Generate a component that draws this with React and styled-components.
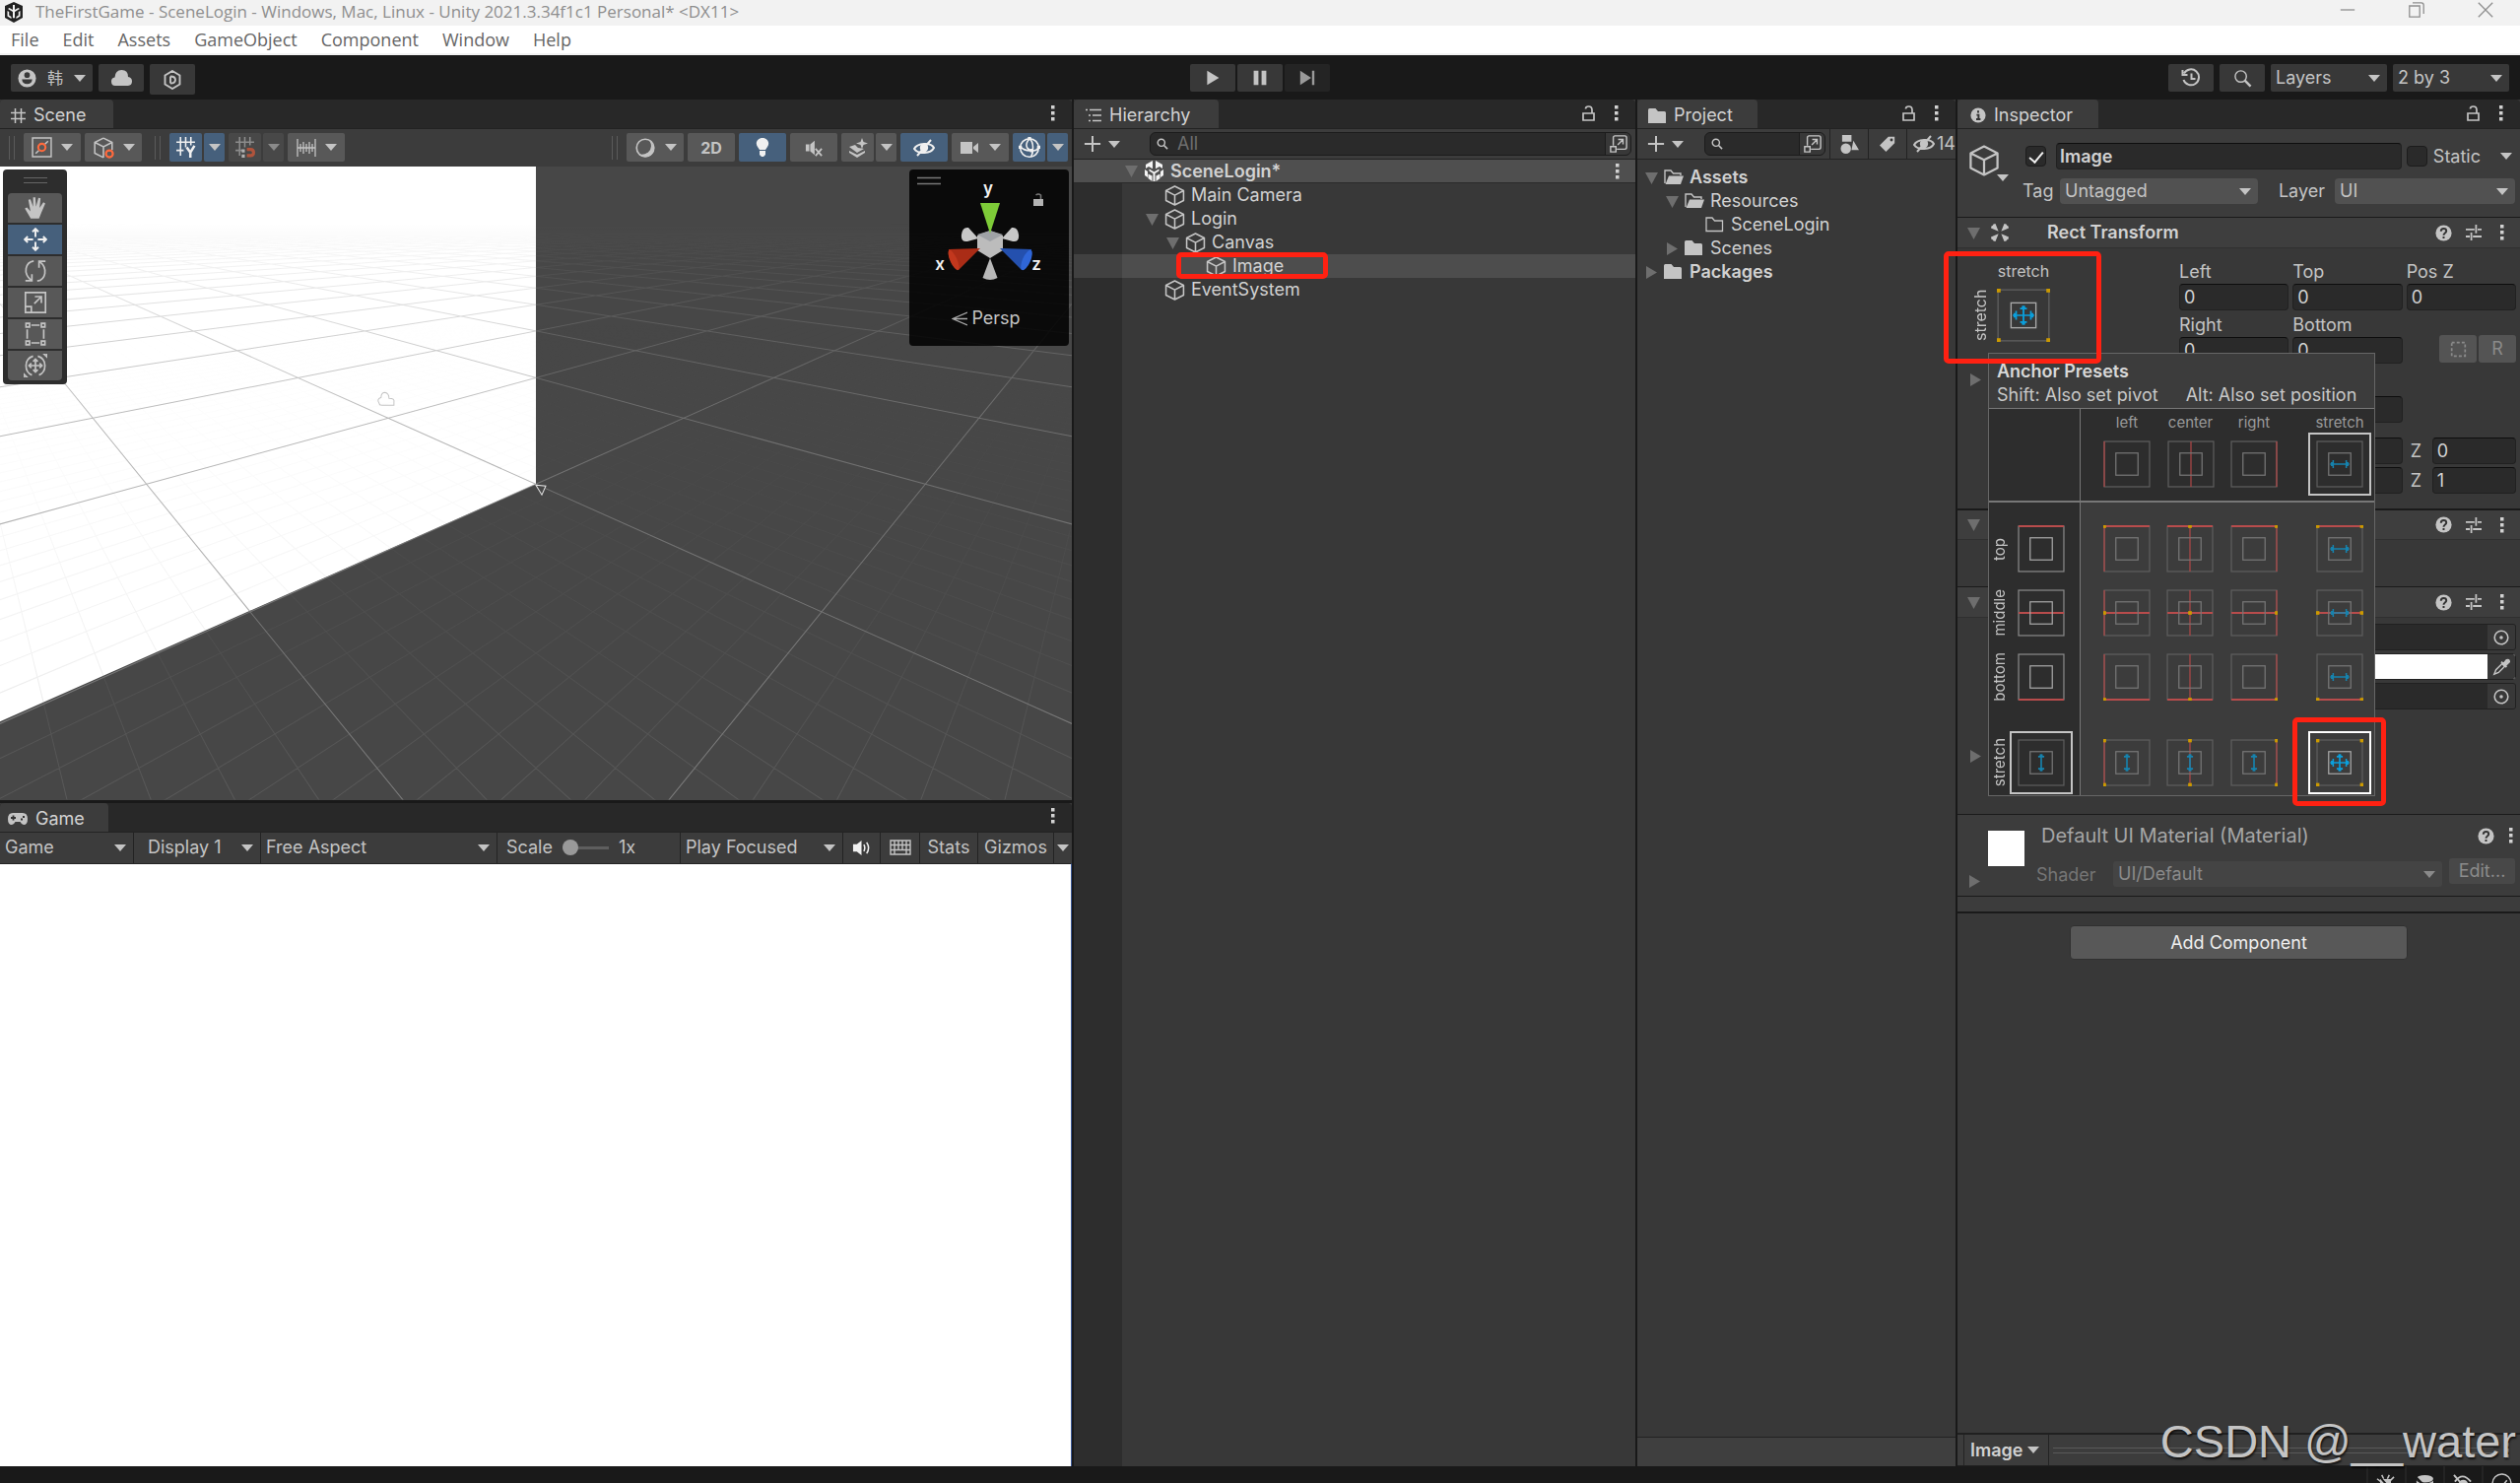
import React, { useState } from 'react';
import styled, { createGlobalStyle, css } from 'styled-components';

const GlobalStyle = createGlobalStyle`
  * {
    box-sizing: border-box;
  }

  body {
    margin: 0;
    background: #191919;
    color: #c4c4c4;
    font: 18px/24px Inter, 'Noto Sans CJK SC', sans-serif;
    overflow: hidden;
  }

  button, input, select {
    margin: 0;
    padding: 0;
    border: 0;
    color: inherit;
    font: inherit;
    background: none;
    border-radius: 0;
  }

  svg {
    display: block;
    flex: none;
  }
`;

/* ---------- icons ---------- */

const Icon = ({ size = 20, w, h, box, children, ...rest }) => (
  <svg
    width={w || size}
    height={h || size}
    viewBox={box || '0 0 20 20'}
    fill="none"
    stroke="#c4c4c4"
    strokeWidth="1.6"
    aria-hidden="true"
    {...rest}
  >
    {children}
  </svg>
);

const Caret = ({ fill = '#c4c4c4' }) => (
  <Icon w={12} h={7} box="0 0 12 7" stroke="none" fill={fill}>
    <path d="M0 0h12L6 7z" />
  </Icon>
);

const Foldout = ({ open }) => (
  <Icon w={13} h={13} box="0 0 13 13" stroke="none" fill="#6e6e6e">
    <path d={open ? 'M0 1h13L6.500 13z' : 'M1 0v13l11-6.500z'} />
  </Icon>
);

const Dots = () => (
  <Icon w={4} h={16} box="0 0 4 16" stroke="none" fill="#d2d2d2">
    <path d="M0 0h3.500v3.500H0zM0 6h3.500v3.500H0zM0 12h3.500v3.500H0z" />
  </Icon>
);

const LockIcon = () => (
  <Icon w={13} h={16} box="0 0 13 16" strokeWidth="1.700">
    <path d="M1 8h11v7H1zM10 8V4.500C10 2 8.500 1 6.500 1S3.500 2 3.500 3.500" />
  </Icon>
);

const CubeIcon = ({ size = 21 }) => (
  <Icon size={size} strokeWidth={size > 24 ? 1.4 : 1.5} strokeLinejoin="round">
    <path d="M10 1l8.500 4.300v9.400L10 19l-8.500-4.300V5.300zM1.500 5.300L10 9.600l8.500-4.300M10 9.600V19" />
  </Icon>
);

const UnityLogo = () => (
  <Icon w={19} h={21} box="0 0 19 21" stroke="none" fill="#f4f4f4">
    <path d="M8 0L1 4v4l3-2 4 2.300V0zM11 0v8.300L15 6l3 2V4zM0 9v6l3 2V11zM19 9v6l-3 2v-6zM4.500 8.500l5 3 5-3v2l-4 2.500v8h-2v-8l-4-2.500zM3.500 18l4 3v-5.500l-4-2zM15.500 18l-4 3v-5.500l4-2z" />
  </Icon>
);

const AppLogo = () => (
  <Icon w={20} h={21} box="0 0 20 21" stroke="none">
    <path d="M10 0l9 4v12l-9 5-9-5V4z" fill="#222" />
    <path d="M9 3v5L5.500 6 4 7l5 3v6l1 .6 1-.6v-6l5-3-1.500-1L11 8V3zM3.500 9v5.500l4 2.500v-2l-2.300-1.500V10zM16.500 9v5.500l-4 2.500v-2l2.300-1.500V10z" fill="#f2f2f2" />
  </Icon>
);

const SearchIcon = ({ size = 12 }) => (
  <Icon size={size}>
    <circle cx="8" cy="8" r="6" strokeWidth={size > 16 ? 1.500 : 2.400} />
    <path d="M12 12l6.500 6.500" strokeWidth="2.600" />
  </Icon>
);

const JumpIcon = () => (
  <Icon size={18}>
    <path d="M4 12V3q0-2 2-2h11q2 0 2 2v11q0 2-2 2H8M9 11l6-6M9.500 5H15v5.500M1 13h6v6H1z" />
  </Icon>
);

const PlusIcon = () => (
  <Icon size={18} strokeWidth="2.200">
    <path d="M10 1v18M1 10h18" />
  </Icon>
);

const EyeOffIcon = ({ color = '#c4c4c4' }) => (
  <Icon w={22} h={18} box="0 0 22 18" stroke={color} strokeWidth="2">
    <path d="M1 10C4 4 18 3 21 9 18 15 5 16 1 10zM4 17L18 1" />
    <circle cx="11" cy="9" r="3.200" fill={color} />
  </Icon>
);

const HelpIcon = () => (
  <Icon size={17}>
    <circle cx="10" cy="10" r="9.500" fill="#c4c4c4" stroke="none" />
    <path d="M6.800 7.800C6.800 3.500 13.200 3.800 13.200 7.500c0 2.500-3.200 2.400-3.200 5M10 14v2.600" stroke="#333" strokeWidth="2.300" />
  </Icon>
);

const PresetIcon = () => (
  <Icon size={16}>
    <path d="M0 6h11M15 6h5M13 0v11M0 15h5M9 15h11M7 10v10" strokeWidth="2.200" />
  </Icon>
);

const FolderClosed = () => (
  <Icon w={20} h={16} box="0 0 20 16" stroke="none" fill="#c4c4c4">
    <path d="M0 1.500Q0 0 1.500 0h6l2.500 3h6.500Q18 3 18 4.500V15H0z" />
  </Icon>
);

const FolderOpen = () => (
  <Icon w={20} h={16} box="0 0 20 16">
    <path d="M1 14V1h6l2.500 3H17v2" strokeWidth="1.400" />
    <path d="M5 6.500h15L17 15H1.500z" fill="#c4c4c4" stroke="none" />
  </Icon>
);

const FolderEmpty = () => (
  <Icon w={20} h={16} box="0 0 20 16" strokeWidth="1.300">
    <path d="M1 14.500V1h6l2.500 3H17.500v10.500z" />
  </Icon>
);

const TargetIcon = () => (
  <Icon size={16}>
    <circle cx="10" cy="10" r="8.500" strokeWidth="2" />
    <circle cx="10" cy="10" r="2.200" fill="#c4c4c4" stroke="none" />
  </Icon>
);

const SnapGrid = ({ magnet }) => (
  <Icon size={21} stroke={magnet ? '#8c8c8c' : '#f0f0f0'} strokeWidth="1.500">
    <path d="M1 5h18M1 13h7M5 0v18M10 0v10M15 0v8" />
    {magnet ? (
      <>
        <path d="M12 12h3.500q3 0 3 3t-3 3H12" stroke="#b0543c" strokeWidth="3" />
        <path d="M7 12h3v3H7zM7 17h3v3H7z" fill="#b0b0b0" stroke="none" />
      </>
    ) : (
      <path d="M11 10l3.500 5 4-6.500M14.500 15v5" strokeWidth="2.400" />
    )}
  </Icon>
);

/* ---------- shell ---------- */

const App = styled.div`
  display: flex;
  flex-direction: column;
  height: 100vh;
  position: relative;
  overflow: hidden;
`;

const TitleBar = styled.header`
  display: flex;
  align-items: center;
  height: 26px;
  padding: 0 27px 2px 4px;
  gap: 12px;
  background: #f2f2f2;
  color: #8e8e8e;
  font-family: 'Open Sans', sans-serif;
  font-size: 17px;
`;

const WindowButtons = styled.div`
  display: flex;
  gap: 54px;
  margin-left: auto;
  padding-bottom: 4px;
`;

const MenuBar = styled.nav`
  display: flex;
  align-items: center;
  height: 30px;
  padding: 0 11px;
  gap: 24px;
  background: #fff;
  border-bottom: 2px solid #f2f2f2;
  color: #666;
  font-family: 'Open Sans', sans-serif;
  font-size: 18px;
`;

const MainToolbar = styled.div`
  display: grid;
  grid-template-columns: 1fr auto 1fr;
  height: 45px;
  padding: 9px 11px;
  background: #191919;
`;

const ToolbarSide = styled.div`
  display: flex;
  align-items: flex-start;
  gap: 6px;
  justify-content: ${({ $end }) => ($end ? 'flex-end' : 'flex-start')};
`;

const BarButton = styled.button`
  display: flex;
  align-items: center;
  justify-content: center;
  gap: 11px;
  width: ${({ $w }) => $w || 46}px;
  height: ${({ $h }) => $h || 28}px;
  background: ${({ $dim }) => ($dim ? '#242424' : '#383838')};
  border-radius: 2px;
  font-size: 16px;
`;

const PlayControls = styled.div`
  display: flex;
  gap: 2px;
`;

const Workspace = styled.main`
  flex: 1;
  min-height: 0;
  display: grid;
  grid-template-columns: minmax(0, 1088fr) minmax(0, 570fr) minmax(0, 323fr) minmax(0, 571fr);
  gap: 2px;
`;

const LeftStack = styled.div`
  display: grid;
  grid-template-rows: minmax(0, 710fr) minmax(0, 673fr);
  gap: 3px;
  min-height: 0;
`;

const Panel = styled.section`
  display: flex;
  flex-direction: column;
  min-width: 0;
  min-height: 0;
  background: #383838;
  position: relative;
`;

const TabBar = styled.div`
  display: flex;
  align-items: stretch;
  height: 29px;
  background: #282828;
  border-radius: 4px 4px 0 0;
  flex: none;
`;

const Tab = styled.button`
  display: flex;
  align-items: center;
  gap: 8px;
  width: ${({ $w }) => $w}px;
  padding: 3px 0 0 ${({ $pad }) => $pad || 11}px;
  background: #3c3c3c;
  border-radius: 4px 4px 0 0;
  color: #d2d2d2;
`;

const TabActions = styled.div`
  display: flex;
  align-items: center;
  gap: 20px;
  margin-left: auto;
  padding: 0 17px 2px 0;
`;

const PanelBar = styled.div`
  display: flex;
  align-items: center;
  flex: none;
  height: ${({ $h }) => $h || 32}px;
  background: #3c3c3c;
  border-top: 1px solid #232323;
  border-bottom: ${({ $line }) => ($line ? '1px solid #232323' : '0')};
  overflow: hidden;
`;

const IconButton = styled.button`
  display: flex;
  align-items: center;
  justify-content: center;
  gap: 7px;
`;

/* drop-down: the native select with its arrow stacked in the same cell */
const SelectBox = styled.div`
  display: grid;
  align-items: center;
  flex: ${({ $grow }) => ($grow ? '1' : 'none')};
  width: ${({ $w }) => ($w ? `${$w}px` : 'auto')};
  height: ${({ $h }) => $h || 26}px;
  background: ${({ $bg }) => $bg || 'transparent'};
  border-radius: ${({ $r }) => $r || 0}px;
  color: ${({ $dim }) => ($dim ? '#8a8a8a' : 'inherit')};

  > * {
    grid-area: 1 / 1;
  }

  > svg {
    justify-self: end;
    margin-right: 7px;
    pointer-events: none;
  }

  select {
    appearance: none;
    width: 100%;
    height: 100%;
    padding-left: 5px;
    outline: none;
  }
`;

const Dropdown = ({ label, value, caret, ...box }) => (
  <SelectBox {...box}>
    <select aria-label={label} defaultValue={value}>
      <option>{value}</option>
    </select>
    <Caret fill={caret} />
  </SelectBox>
);

/* red frame drawn over a spot worth noticing */
const Marker = styled.div`
  position: absolute;
  z-index: 5;
  top: ${({ $top }) => $top}px;
  left: ${({ $left }) => $left}px;
  width: ${({ $w }) => $w}px;
  height: ${({ $h }) => $h}px;
  border: 5px solid #ff2112;
  border-radius: 5px;
  pointer-events: none;
`;

/* ---------- scene ---------- */

const SceneBar = styled(PanelBar)`
  gap: 4px;
  padding: 0 4px 1px 9px;
`;

const Grip = styled.span`
  width: 6px;
  height: 24px;
  margin: 0 ${({ $after }) => $after || 5}px 0 ${({ $before }) => $before || 0}px;
  border: solid #5a5a5a;
  border-width: 0 1px;
`;

const Split = styled.div`
  display: flex;
  gap: 2px;
`;

const SceneButton = styled.button`
  display: flex;
  align-items: center;
  justify-content: center;
  gap: 9px;
  width: ${({ $w }) => $w || 48}px;
  height: 29px;
  border-radius: 2px;
  font-weight: 700;
  font-size: 16px;
  background: ${({ $on, $off }) => ($on ? '#46607c' : $off ? '#484848' : '#585858')};
`;

const Spacer = styled.div`
  flex: 1;
`;

const Viewport = styled.div`
  position: relative;
  flex: 1;
  min-height: 0;
  background: #474747;
  overflow: hidden;
`;

const Canvas = styled.svg`
  width: 100%;
  height: 100%;
`;

const ToolStrip = styled.div`
  position: absolute;
  top: 3px;
  left: 3px;
  display: flex;
  flex-direction: column;
  gap: 2px;
  padding: 8px 5px 4px;
  background: #2d2d2d;
  border-radius: 4px;
`;

const Handle = styled.div`
  width: 24px;
  height: 6px;
  border: solid #666;
  border-width: 1px 0;
  margin: 0 auto 8px;
`;

const ToolButton = styled.button`
  display: flex;
  align-items: center;
  justify-content: center;
  width: 55px;
  height: 30px;
  border-radius: ${({ $edge }) => ($edge === 'top' ? '4px 4px 0 0' : $edge === 'bottom' ? '0 0 4px 4px' : '0')};
  background: ${({ $on }) => ($on ? '#46607c' : '#585858')};
`;

const Orientation = styled.div`
  position: absolute;
  top: 3px;
  right: 3px;
  width: 162px;
  height: 179px;
  background: rgba(0, 0, 0, 0.85);
  border-radius: 4px;
`;

const PerspButton = styled.button`
  display: flex;
  align-items: center;
  justify-content: center;
  gap: 4px;
  width: 100%;
  padding-right: 6px;
`;

const AxisText = styled.text`
  font: 600 17px Inter, sans-serif;
  fill: #f2f2f2;
  stroke: none;
  text-anchor: middle;
`;

/* ground grid: two fans of lines meeting at vanishing points left and right */
const HORIZON = 45;
const CENTER = 544;
const A = 0.00361;
const B = 0.0023;

const gridLine = (c, side) => {
  const k = A + B * c;
  const y = (x) => HORIZON + (1 - (side * B * (x - CENTER)) / 1.426) / k;
  return `M0 ${y(0).toFixed(1)}L1088 ${y(1088).toFixed(1)}`;
};

const fan = (from, to, step) => {
  const out = [];
  for (let i = 0; from + i * step <= to + 0.001; i++) {
    const c = from + i * step;
    out.push(gridLine(c, 1), gridLine(c, -1));
  }
  return out.join('');
};

const MAJOR = fan(-1, 45, 1);
const MINOR = fan(-1.5, 3, 0.1);

const SceneCanvas = () => (
  <Canvas viewBox="0 0 1088 642" preserveAspectRatio="xMidYMin slice" fill="none">
    <defs>
      <linearGradient id="far" x1="0" y1="57" x2="0" y2="642" gradientUnits="userSpaceOnUse">
        <stop offset="0" stopColor="#fff" stopOpacity="0" />
        <stop offset="0.08" stopColor="#fff" stopOpacity="0.12" />
        <stop offset="0.2" stopColor="#fff" stopOpacity="0.4" />
        <stop offset="0.35" stopColor="#fff" stopOpacity="0.6" />
        <stop offset="1" stopColor="#fff" stopOpacity="0.7" />
      </linearGradient>
      <linearGradient id="near" x1="0" y1="150" x2="0" y2="642" gradientUnits="userSpaceOnUse">
        <stop offset="0" stopColor="#fff" stopOpacity="0" />
        <stop offset="0.3" stopColor="#fff" stopOpacity="0.03" />
        <stop offset="0.7" stopColor="#fff" stopOpacity="0.12" />
        <stop offset="1" stopColor="#fff" stopOpacity="0.28" />
      </linearGradient>
      <mask id="farMask" maskUnits="userSpaceOnUse" x="0" y="0" width="1088" height="642">
        <rect width="1088" height="642" fill="url(#far)" />
      </mask>
      <mask id="nearMask" maskUnits="userSpaceOnUse" x="0" y="0" width="1088" height="642">
        <rect width="1088" height="642" fill="url(#near)" />
      </mask>
    </defs>
    <path d="M0 0H544V322L0 563z" fill="#fff" />
    <g mask="url(#nearMask)">
      <path d={MINOR} stroke="#8a8a8a" />
    </g>
    <g mask="url(#farMask)">
      <path d={MAJOR} stroke="#8a8a8a" />
    </g>
    <path d="M385 240q-3-4 2-6 0-5 4-5 4 1 4 6 6 0 5 4v3h-12q-3 0-3-2z" stroke="#c4c4c4" />
    <path d="M544 323l10 1-4 9z" stroke="#e6e6e6" fill="#474747" />
  </Canvas>
);

const ScenePanel = () => {
  const [tool, setTool] = useState('Move');

  const tools = [
    ['Hand', <path key="p" d="M6 19L1 10.500 2.800 9.500l3 3.500L4 3.200 5.800 2.800 8 9V1h1.900L10.500 9l2-7.500 1.800.4-.8 8 3.200-4.600 1.600 1L15 14l-2 5z" fill="#c4c4c4" stroke="none" />],
    ['Move', <path key="p" d="M10 8V1M7.500 3.500L10 1l2.500 2.500M10 12v7M7.500 16.500L10 19l2.500-2.500M8 10H1M3.500 7.500L1 10l2.500 2.500M12 10h7M16.500 7.500L19 10l-2.500 2.500" stroke="#f0f0f0" />],
    ['Rotate', <path key="p" d="M8.500 1.500C1.500 2.500-1 12 6.500 18M1.500 18.200h5.500v-5.500M11.500 18.500C18.500 17.500 21 8 13.500 2M18.500 1.800H13v5.500" strokeWidth="1.400" />],
    ['Scale', <path key="p" d="M1.500 1.500h17v17h-17zM1.500 13.500h5v5M9 11l6-6M9.500 5H15v5.500" strokeWidth="1.400" />],
    ['Rect', <path key="p" d="M6.500 2.500h7M6.500 17.500h7M3 6v8M17 6v8M2 1h3v3H2zM15 1h3v3h-3zM2 16h3v3H2zM15 16h3v3h-3z" strokeWidth="1.400" />],
    ['Transform', <path key="p" d="M10 5v10M5 10h10M8 6.500l2-2 2 2M8 13.500l2 2 2-2M6.500 8l-2 2 2 2M13.500 8l2 2-2 2M8 2Q2 4 2 10t5 8M12 2q6 2 6 8t-5 8M17 0h3v3zM0 20v-3l3 3z" strokeWidth="1.400" />],
  ];

  return (
    <Panel>
      <TabBar>
        <Tab $w={115} $pad={11}>
          <Icon size={15} strokeWidth="2"><path d="M6 0v20M14 0v20M0 6h20M0 14h20" /></Icon>
          Scene
        </Tab>
        <TabActions><Dots /></TabActions>
      </TabBar>
      <SceneBar $h={39}>
        <Grip />
        <SceneButton $w={58} aria-label="Tool pivot">
          <Icon size={21} strokeWidth="1.400">
            <path d="M1 1h18v18H1zM4 16l3-3M13 7l3-3" /><circle cx="10" cy="10" r="3.500" stroke="#ff6a3d" strokeWidth="2" />
          </Icon>
          <Caret />
        </SceneButton>
        <SceneButton $w={58} aria-label="Tool rotation">
          <Icon size={22} strokeWidth="1.400">
            <path d="M10 1l8 4v7M10 19l-8-4V5l8-4M2 5l8 4 8-4M10 9v10" /><circle cx="15.500" cy="15.500" r="3.200" stroke="#ff6a3d" strokeWidth="2" />
          </Icon>
          <Caret />
        </SceneButton>
        <Grip $before={9} />
        <Split>
          <SceneButton $w={33} $on aria-label="Grid"><SnapGrid /></SceneButton>
          <SceneButton $w={21} $on aria-label="Grid options"><Caret /></SceneButton>
        </Split>
        <Split>
          <SceneButton $w={33} $off aria-label="Snap"><SnapGrid magnet /></SceneButton>
          <SceneButton $w={21} $off aria-label="Snap options"><Caret fill="#8a8a8a" /></SceneButton>
        </Split>
        <SceneButton $w={58} aria-label="Increment">
          <Icon size={20}><path d="M1 1v18M19 1v18M1 10h18M4 6v8M7 4v12M10 6v8M13 4v12M16 6v8" strokeWidth="1.300" /></Icon>
          <Caret />
        </SceneButton>
        <Spacer />
        <Grip />
        <SceneButton $w={58} aria-label="Shading">
          <Icon size={22}>
            <circle cx="10" cy="10" r="8" strokeWidth="1.500" />
            <path d="M14.500 3.500Q18 10 13 14.500 9 17.500 4.500 16.500 9.500 19.500 15 16.500 20 12 14.500 3.500z" fill="#c4c4c4" strokeWidth="1" />
          </Icon>
          <Caret />
        </SceneButton>
        <SceneButton>2D</SceneButton>
        <SceneButton $on aria-label="Lighting">
          <Icon w={14} h={20} box="0 0 14 20" stroke="none" fill="#f0f0f0"><path d="M7 0C2 0-1 5 2 9l2 3h6l2-3C15 5 12 0 7 0zM4 13h6v4l-2 2H6l-2-2z" /></Icon>
        </SceneButton>
        <SceneButton aria-label="Audio">
          <Icon size={18}><path d="M1 6h4v8H1zM6 6l5-4v16l-5-4z" fill="#c4c4c4" stroke="none" /><path d="M12 11l7 8M19 11l-7 8" strokeWidth="2" /></Icon>
        </SceneButton>
        <Split>
          <SceneButton $w={33} aria-label="Effects">
            <Icon size={20} stroke="none" fill="#c4c4c4"><path d="M14 0l1.500 4 4.500 1.500-4.500 1.500L14 11l-1.500-4L8 5.500 12.500 4zM1 9l6-2 3 3 6 1-7 4zM1 13l8 4 8-4v2l-8 5-8-5z" /></Icon>
          </SceneButton>
          <SceneButton $w={21} aria-label="Effects options"><Caret /></SceneButton>
        </Split>
        <SceneButton $on aria-label="Visibility"><EyeOffIcon color="#f0f0f0" /></SceneButton>
        <SceneButton $w={58} aria-label="Camera">
          <Icon size={20} stroke="none" fill="#c4c4c4"><path d="M0 4h12v12H0zM13 9l5-4v10l-5-4z" /></Icon>
          <Caret />
        </SceneButton>
        <Split>
          <SceneButton $w={33} $on aria-label="Gizmos">
            <Icon size={22} stroke="#f0f0f0" strokeWidth="1.400">
              <circle cx="10" cy="10" r="8.500" /><path d="M10 1.500C6 6 6 11 12 12.500c3 .6 5-.5 6.500-2.500M10 1.500c4 3 4 12 1.500 17M1.500 9c3 3 6 4 10.500 3.500" />
              <path d="M8.500 0h3v3h-3zM0 8h3v3H0zM10.500 11h3v3h-3zM17 8h3v3h-3z" fill="#f0f0f0" stroke="none" />
            </Icon>
          </SceneButton>
          <SceneButton $w={21} $on aria-label="Gizmo options"><Caret /></SceneButton>
        </Split>
      </SceneBar>
      <Viewport>
        <SceneCanvas />
        <ToolStrip>
          <Handle />
          {tools.map(([name, shape], i) => (
            <ToolButton
              key={name}
              aria-label={name}
              $on={tool === name}
              $edge={i === 0 ? 'top' : i === tools.length - 1 ? 'bottom' : ''}
              onClick={() => setTool(name)}
            >
              <Icon size={24}>{shape}</Icon>
            </ToolButton>
          ))}
        </ToolStrip>
        <Orientation>
          <Icon w={162} h={139} box="0 0 162 139" stroke="none">
            <path d="M8 8.500h24M8 14.500h24" stroke="#777" />
            <AxisText x="80" y="25">y</AxisText>
            <AxisText x="31" y="102">x</AxisText>
            <AxisText x="129" y="102">z</AxisText>
            <path d="M126 30h10v7h-10z" fill="#b4b4b4" />
            <path d="M128.500 26q2.500-2 5 0v4" stroke="#777" fill="none" />
            <path d="M70 70L60 59q-6-1-7 7t6 7zM94 70l10-11q6-1 7 7t-6 7z" fill="#c8c8c8" />
            <path d="M82 62l13 5v15l-13 8-13-8V67z" fill="#bcbcbc" />
            <path d="M82 62l13 4-13 7-13-7z" fill="#9fa2a6" />
            <path d="M82 90l7.500 20q-7.500 4-15 0z" fill="#b8b8b8" />
            <path d="M72 34h20L82 65z" fill="#7ecb38" />
            <path d="M72 80L40 81q-1 14 10 21z" fill="#aa2c16" />
            <ellipse cx="45" cy="92" rx="3.500" ry="11" transform="rotate(-24 45 92)" fill="#c2371d" />
            <path d="M92 80l32 1q1 14-10 21z" fill="#2450ae" />
            <ellipse cx="119" cy="92" rx="4" ry="11" transform="rotate(24 119 92)" fill="#2f66d8" />
          </Icon>
          <PerspButton>
            <Icon w={16} h={15} box="0 0 16 15" strokeWidth="1.300" stroke="#aaa"><path d="M16 1L1 7.500 16 14M1 7.500h15" /></Icon>
            Persp
          </PerspButton>
        </Orientation>
      </Viewport>
    </Panel>
  );
};

/* ---------- game ---------- */

const GameCell = styled.div`
  display: flex;
  align-items: center;
  height: 100%;
  width: ${({ $w }) => $w}px;
  padding-left: ${({ $pad }) => $pad || 0}px;
  justify-content: ${({ $center }) => ($center ? 'center' : 'flex-start')};
  flex: ${({ $grow }) => ($grow ? '1' : 'none')};
  border-right: ${({ $last }) => ($last ? '0' : '1px solid #232323')};
`;

const GameScreen = styled.div`
  flex: 1;
  background: #fff;
  border-top: 1px solid #232323;
  border-right: 1px solid #3b5998;
`;

const Scale = styled.label`
  display: flex;
  align-items: center;
  gap: 10px;

  input {
    appearance: none;
    width: 47px;
    height: 16px;
    background: linear-gradient(#5e5e5e, #5e5e5e) center / 100% 3px no-repeat;
  }

  input::-webkit-slider-thumb {
    appearance: none;
    width: 16px;
    height: 16px;
    border-radius: 50%;
    background: #999;
  }
`;

const GamePanel = () => (
  <Panel>
    <TabBar>
      <Tab $w={110} $pad={8}>
        <Icon w={20} h={12} box="0 0 20 12" stroke="none">
          <path d="M5 0h10q5 0 5 6t-4 6q-2 0-3.500-3h-5Q6 12 4 12 0 12 0 6t5-6z" fill="#c4c4c4" />
          <path d="M3 5h5M5.500 2.500v5M13 6.500h2M15 4h2" stroke="#333" strokeWidth="1.800" />
        </Icon>
        Game
      </Tab>
      <TabActions><Dots /></TabActions>
    </TabBar>
    <PanelBar $h={32}>
      <GameCell $w={136}><Dropdown label="View" value="Game" $grow /></GameCell>
      <GameCell $w={129} $pad={9}><Dropdown label="Display" value="Display 1" $grow /></GameCell>
      <GameCell $w={240}><Dropdown label="Aspect" value="Free Aspect" $grow /></GameCell>
      <GameCell $grow $pad={9}>
        <Scale>
          Scale
          <input type="range" min="1" max="5" defaultValue="1" />
          1x
        </Scale>
      </GameCell>
      <GameCell $w={165}><Dropdown label="Play mode" value="Play Focused" $grow /></GameCell>
      <GameCell as="button" $w={38} $center aria-label="Mute audio">
        <Icon size={19} stroke="#f0f0f0"><path d="M1 6h4l5-4v16l-5-4H1z" fill="#f0f0f0" stroke="none" /><path d="M12.500 6.500q2 3.500 0 7M15.500 4q4 6 0 12" /></Icon>
      </GameCell>
      <GameCell as="button" $w={40} $center aria-label="Shortcuts">
        <Icon w={22} h={16} box="0 0 22 16" strokeWidth="1.400"><path d="M1 1h20v14H1zM1 5.500h20M1 10.500h20M5 1v9M9 1v9M13 1v9M17 1v9M5 11v4M17 11v4" /></Icon>
      </GameCell>
      <GameCell as="button" $w={59} $center>Stats</GameCell>
      <GameCell as="button" $w={77} $center>Gizmos</GameCell>
      <GameCell as="button" $w={18} $center $last aria-label="Gizmo list"><Caret /></GameCell>
    </PanelBar>
    <GameScreen />
  </Panel>
);

/* ---------- hierarchy ---------- */

const SearchBox = styled.label`
  display: flex;
  align-items: center;
  flex: 1;
  min-width: 0;
  height: 24px;
  margin: 0 4px 0 ${({ $start }) => $start}px;
  background: #2a2a2a;
  border: 1px solid #1c1c1c;
  border-radius: 6px;
  padding-left: 6px;
  gap: 9px;

  input {
    flex: 1;
    min-width: 0;
    outline: none;
  }

  input::placeholder {
    color: #6e6e6e;
    opacity: 1;
  }

  button {
    display: flex;
    justify-content: center;
    align-items: center;
    width: 26px;
    height: 100%;
    background: #383838;
    border-left: 1px solid #1c1c1c;
    border-radius: 0 5px 5px 0;
  }
`;

const AddButton = styled(IconButton)`
  margin-left: 10px;
`;

const HierarchyTree = styled.ul`
  flex: 1;
  margin: 0;
  padding: 0;
  list-style: none;
  background: linear-gradient(90deg, #2d2d2d 49px, #383838 49px);
`;

const HierarchyRow = styled.li`
  display: flex;
  align-items: center;
  gap: 6px;
  height: 24px;
  position: relative;
  padding-left: ${({ $depth }) => 52 + $depth * 21}px;
  color: #d2d2d2;
  ${({ $root }) =>
    $root &&
    css`
      gap: 7px;
      padding-right: 16px;
      font-weight: 600;
      background: #4f4f4f;
      border-bottom: 1px solid #2a2a2a;
    `}
  ${({ $selected }) =>
    $selected &&
    css`
      background: linear-gradient(90deg, #414141 49px, #4d4d4d 49px);
    `}
`;

const FoldSlot = styled.span`
  display: flex;
  width: 13px;
`;

const PushRight = styled.span`
  margin-left: auto;
`;

const objects = [
  { name: 'Main Camera', depth: 1 },
  { name: 'Login', depth: 1, open: true },
  { name: 'Canvas', depth: 2, open: true },
  { name: 'Image', depth: 3, selected: true },
  { name: 'EventSystem', depth: 1 },
];

const HierarchyPanel = () => (
  <Panel>
    <TabBar>
      <Tab $w={147} $pad={12}>
        <Icon w={16} h={14} box="0 0 16 14" strokeWidth="1.500"><path d="M0 1.500h2M4 1.500h12M3 7h2M7 7h9M3 12.500h2M7 12.500h9" /></Icon>
        Hierarchy
      </Tab>
      <TabActions><LockIcon /><Dots /></TabActions>
    </TabBar>
    <PanelBar $line>
      <AddButton aria-label="Create"><PlusIcon /><Caret /></AddButton>
      <SearchBox $start={30}>
        <SearchIcon />
        <input placeholder="All" aria-label="Search hierarchy" />
        <button aria-label="Open search"><JumpIcon /></button>
      </SearchBox>
    </PanelBar>
    <HierarchyTree>
      <HierarchyRow $root $depth={0}>
        <Foldout open />
        <UnityLogo />
        SceneLogin*
        <PushRight><Dots /></PushRight>
      </HierarchyRow>
      {objects.map(({ name, depth, open, selected }) => (
        <HierarchyRow key={name} $depth={depth} $selected={selected}>
          <FoldSlot>{open && <Foldout open />}</FoldSlot>
          <CubeIcon />
          {name}
          {selected && <Marker $top={-2} $left={104} $w={154} $h={27} />}
        </HierarchyRow>
      ))}
    </HierarchyTree>
  </Panel>
);

/* ---------- project ---------- */

const ProjectTree = styled.ul`
  flex: 1;
  margin: 0;
  padding: 6px 0;
  list-style: none;
`;

const ProjectRow = styled.li`
  display: flex;
  align-items: center;
  gap: 6px;
  height: 24px;
  padding-left: ${({ $depth }) => 8 + $depth * 21}px;
  color: #d2d2d2;
  font-weight: ${({ $depth }) => ($depth === 0 ? 600 : 400)};
`;

const FilterButton = styled.button`
  display: flex;
  align-items: center;
  justify-content: ${({ $start }) => ($start ? 'flex-start' : 'center')};
  gap: 2px;
  flex: none;
  width: ${({ $w }) => $w}px;
  height: 100%;
  padding-left: ${({ $start }) => ($start ? 6 : 0)}px;
  border-left: 1px solid #232323;
`;

const PanelFooter = styled.div`
  height: 30px;
  background: #3f3f3f;
  border-top: 1px solid #232323;
`;

const folders = [
  { name: 'Assets', depth: 0, open: true, icon: <FolderOpen /> },
  { name: 'Resources', depth: 1, open: true, icon: <FolderOpen /> },
  { name: 'SceneLogin', depth: 2, leaf: true, icon: <FolderEmpty /> },
  { name: 'Scenes', depth: 1, icon: <FolderClosed /> },
  { name: 'Packages', depth: 0, icon: <FolderClosed /> },
];

const ProjectPanel = () => (
  <Panel>
    <TabBar>
      <Tab $w={122} $pad={11}>
        <Icon w={18} h={15} box="0 0 18 15" stroke="none" fill="#c4c4c4">
          <path d="M0 1.500Q0 0 1.500 0h6l2.500 3h6.500Q18 3 18 4.500V15H0z" />
        </Icon>
        Project
      </Tab>
      <TabActions><LockIcon /><Dots /></TabActions>
    </TabBar>
    <PanelBar $line>
      <AddButton aria-label="Create asset"><PlusIcon /><Caret /></AddButton>
      <SearchBox $start={21}>
        <SearchIcon />
        <input aria-label="Search project" />
        <button aria-label="Open search"><JumpIcon /></button>
      </SearchBox>
      <FilterButton $w={39} aria-label="Search by type">
        <Icon size={19} stroke="none" fill="#c4c4c4"><path d="M2 0h10v7H2zM14 6l6 10h-8z" /><circle cx="6" cy="14.500" r="5.500" /></Icon>
      </FilterButton>
      <FilterButton $w={39} aria-label="Search by label">
        <Icon size={16} stroke="none" fill="#c4c4c4"><path d="M11 1h8v8L8 20 0 12z" /><circle cx="15" cy="5" r="1.800" fill="#333" /></Icon>
      </FilterButton>
      <FilterButton $w={50} $start><EyeOffIcon />14</FilterButton>
    </PanelBar>
    <ProjectTree>
      {folders.map(({ name, depth, open, leaf, icon }) => (
        <ProjectRow key={name} $depth={depth}>
          <FoldSlot>{!leaf && <Foldout open={open} />}</FoldSlot>
          {icon}
          {name}
        </ProjectRow>
      ))}
    </ProjectTree>
    <PanelFooter />
  </Panel>
);

/* ---------- inspector ---------- */

const InspectorPane = styled(Panel)`
  z-index: 2;
`;

const ObjectHeader = styled.div`
  display: grid;
  grid-template-columns: 58px minmax(0, 1fr);
  height: 90px;
  padding: 14px 5px 0 11px;
  background: #3c3c3c;
  border-top: 1px solid #232323;
`;

const ObjectIcon = styled.button`
  display: flex;
  align-items: flex-end;
  align-self: start;
  height: 39px;

  svg:first-child {
    margin-bottom: 5px;
  }

  svg:last-child {
    margin-left: -3px;
  }
`;

const HeaderLines = styled.div`
  display: flex;
  flex-direction: column;
  gap: 9px;
`;

const Line = styled.div`
  display: flex;
  align-items: center;
`;

const Check = styled.input`
  appearance: none;
  display: grid;
  place-items: center;
  width: 21px;
  height: 21px;
  flex: none;
  background: #2a2a2a;
  border: 1px solid #1c1c1c;
  border-radius: 4px;

  &:checked::after {
    content: '';
    width: 6px;
    height: 12px;
    border: solid #f0f0f0;
    border-width: 0 2px 2px 0;
    transform: translateY(-1px) rotate(40deg);
  }
`;

const TextField = styled.input`
  min-width: 0;
  width: 100%;
  height: 27px;
  padding: 0 4px;
  background: #2a2a2a;
  border: 1px solid #212121;
  border-top-color: #0d0d0d;
  border-radius: 4px;
  color: #d2d2d2;
`;

const NameField = styled(TextField)`
  flex: 1;
  margin-left: 10px;
  padding: 0 3px;
  font-weight: 600;
`;

const StaticLabel = styled.label`
  display: flex;
  align-items: center;
  gap: 6px;
  margin-left: 5px;
  padding-right: 3px;

  svg {
    margin-left: 14px;
  }
`;

const Caption = styled.span`
  flex: none;
  width: ${({ $w }) => $w}px;
  padding-right: ${({ $gap }) => $gap}px;
  text-align: right;
`;

const TagCaption = styled.span`
  flex: none;
  width: 38px;
  margin-left: -3px;
`;

const ComponentBar = styled.div`
  display: flex;
  align-items: center;
  height: 32px;
  padding: 0 16px 0 10px;
  gap: 11px;
  background: #3e3e3e;
  border-top: ${({ $thick }) => ($thick ? 2 : 1)}px solid #1a1a1a;
  border-bottom: 1px solid #303030;
`;

const ComponentName = styled.h2`
  margin: 0 0 0 28px;
  font-size: 18px;
  font-weight: 600;
  color: #d2d2d2;
`;

const BarTools = styled.div`
  display: flex;
  align-items: center;
  gap: 14px;
  margin-left: auto;

  svg:last-child {
    margin-left: 5px;
  }
`;

const HeaderTools = () => (
  <BarTools>
    <HelpIcon />
    <PresetIcon />
    <Dots />
  </BarTools>
);

const RectBody = styled.div`
  display: grid;
  grid-template-columns: minmax(0, 221px) minmax(0, 1fr);
  height: 264px;
  padding: 12px 4px 0 0;
  position: relative;
`;

const AnchorWidget = styled.button`
  display: grid;
  grid-template-columns: 20px 54px;
  align-content: start;
  gap: 7px;
  padding-left: 13px;
  font-size: 16px;
  line-height: 22px;
`;

const Vertical = styled.span`
  writing-mode: vertical-rl;
  transform: rotate(180deg);
  justify-self: center;
  text-align: center;
  font-size: ${({ $size }) => $size || 15}px;
  line-height: 20px;
`;

const WidgetTop = styled.span`
  grid-column: 2;
  justify-self: center;
`;

const Fields = styled.div`
  display: grid;
  grid-template-columns: repeat(3, minmax(0, 1fr));
  grid-template-rows: 54px 53px;
  column-gap: 4px;
  align-content: start;
  padding-left: 4px;
`;

const Field = styled.label`
  display: flex;
  flex-direction: column;
`;

const FieldButtons = styled.div`
  display: flex;
  gap: 2px;
  justify-content: flex-end;
  margin-top: 22px;
  height: 28px;

  button {
    display: flex;
    align-items: center;
    justify-content: center;
    width: 38px;
    background: #545454;
    color: #8a8a8a;
    border-radius: 3px;
  }
`;

const RowField = styled.div`
  display: grid;
  grid-column: 1 / -1;
  grid-template-columns: subgrid;
  margin-top: ${({ $top }) => $top}px;

  > input {
    grid-column: 2;
  }

  > label {
    display: grid;
    grid-template-columns: 22px 1fr;
    padding-left: 4px;
    align-items: center;
  }
`;

const SideFold = styled.button`
  position: absolute;
  left: 12px;
  top: ${({ $top }) => $top}px;
`;

const RendererBody = styled.div`
  height: 47px;
`;

const ImageBody = styled.div`
  position: relative;
  height: 199px;
  padding: 6px 4px;
  display: flex;
  flex-direction: column;
  align-items: flex-end;
  gap: 3px;
`;

const ObjectField = styled.div`
  display: flex;
  justify-content: flex-end;
  width: 60%;
  height: 27px;
  background: ${({ $fill }) => $fill || '#2a2a2a'};
  border: 1px solid #212121;
  border-radius: 3px;
  overflow: hidden;

  button {
    display: flex;
    align-items: center;
    justify-content: center;
    width: 28px;
    background: #383838;
  }
`;

const MaterialBlock = styled.div`
  display: grid;
  grid-template-columns: 66px minmax(0, 1fr);
  height: 83px;
  padding: 9px 5px 0 11px;
  background: #3c3c3c;
  border-top: 1px solid #1a1a1a;
`;

const Swatch = styled.div`
  display: flex;
  flex-direction: column;
  gap: 9px;
  padding-top: 7px;

  i {
    width: 37px;
    height: 36px;
    margin-left: 20px;
    background: #fff;
  }
`;

const MaterialLines = styled.div`
  display: flex;
  flex-direction: column;
  gap: 11px;
  color: #a6a6a6;
`;

const MaterialTitle = styled.div`
  display: flex;
  align-items: center;
  gap: 15px;
  padding: 0 2px 0 8px;
  font-size: 20px;

  span {
    margin-right: auto;
  }
`;

const ShaderLine = styled.div`
  display: flex;
  align-items: flex-end;
  gap: 7px;
  padding-left: 3px;
  color: #757575;

  label {
    width: 71px;
  }
`;

const EditButton = styled.button`
  width: 67px;
  height: 26px;
  margin-bottom: 3px;
  background: #484848;
  border-radius: 3px;
  color: #8c8c8c;
`;

const Strip = styled.div`
  height: 18px;
  border: solid #1a1a1a;
  border-width: 1px 0 2px;
  background: #3c3c3c;
`;

const AddComponent = styled.button`
  align-self: center;
  width: 60%;
  height: 35px;
  margin-top: 12px;
  background: #585858;
  border: 1px solid #303030;
  border-radius: 4px;
  color: #eee;
`;

const PreviewBar = styled.div`
  display: flex;
  align-items: stretch;
  height: 34px;
  margin-top: auto;
  background: #3c3c3c;
  border-top: 2px solid #202020;
  border-bottom: 1px solid #202020;
  padding: 0 11px 0 6px;

  button {
    display: flex;
    align-items: center;
    gap: 5px;
    width: 87px;
    padding-left: 6px;
    border: solid #232323;
    border-width: 0 1px;
    color: #d2d2d2;
    font-weight: 600;
  }
`;

const DragLines = styled.div`
  flex: 1;
  align-self: center;
  height: 6px;
  margin: 0 12px 0 4px;
  border: solid #5a5a5a;
  border-width: 1px 0;
`;

const DotsCell = styled.div`
  align-self: center;
`;

/* ---------- anchor presets ---------- */

const Popup = styled.div`
  position: absolute;
  z-index: 3;
  top: 106px;
  left: 31px;
  width: 393px;
  background: #3c3c3c;
  border: 1px solid #666;
`;

const PopupHead = styled.div`
  height: 56px;
  padding: 6px 8px 0;
  color: #c8c8c8;
  border-bottom: 1px solid #777;

  strong {
    display: block;
    font-weight: 600;
    color: #d8d8d8;
  }
`;

const Hints = styled.div`
  display: flex;
  gap: 28px;
`;

const PresetRow = styled.div`
  display: grid;
  grid-template-columns: 93px 15px 64px 65px 64px 23px 64px;
  height: ${({ $h }) => $h}px;
  align-items: end;
  background: ${({ $head }) =>
    $head ? '#2d2d2d' : 'linear-gradient(90deg, #2d2d2d 93px, #3c3c3c 93px)'};
  border-bottom: ${({ $head }) => ($head ? '2px solid #777' : '0')};
  padding-bottom: ${({ $head }) => ($head ? 5 : 1)}px;
  position: relative;

  &::after {
    content: '';
    position: absolute;
    top: 0;
    bottom: ${({ $head }) => ($head ? -2 : 0)}px;
    left: 92px;
    width: 1px;
    background: #777;
  }
`;

const RowHead = styled.div`
  display: grid;
  grid-template-columns: 21px 64px;
  align-items: center;
`;

const ColHead = styled.div`
  display: flex;
  flex-direction: column;
  align-items: center;
  color: #9a9a9a;
  font-size: 15px;
  line-height: 20px;
  grid-column: ${({ $col }) => $col};
`;

const PresetCell = styled.button`
  display: grid;
  place-items: center;
  width: 64px;
  height: 64px;
  border: ${({ $frame }) => ($frame ? 2 : 0)}px solid ${({ $frame }) => $frame || 'transparent'};
  grid-column: ${({ $col }) => $col || 'auto'};
  position: relative;
`;

const pos = { left: 0, center: 0.5, right: 1, top: 0, middle: 0.5, bottom: 1 };

const PresetIconArt = ({ h, v, size = 48, bright, big }) => {
  const s = 47;
  const edge = bright ? '#8a8a8a' : '#5e5e5e';
  const x = h in pos ? 1 + pos[h] * 45 : null;
  const y = v in pos ? 1 + pos[v] * 45 : null;
  const hs = h === 'stretch';
  const vs = v === 'stretch';
  const xs = hs ? [1.5, 45.5] : x !== null ? [x] : [];
  const ys = vs ? [1.5, 45.5] : y !== null ? [y] : [];
  const blue = big ? '#0a9fdc' : '#1683ae';
  return (
    <svg width={size} height={size} viewBox={`0 0 ${s} ${s}`} fill="none" strokeWidth="1.200" aria-hidden="true">
      <rect x="1" y="1" width="45" height="45" stroke={edge} />
      {x !== null && <path d={`M${x} 1v45`} stroke="#b04848" />}
      {y !== null && <path d={`M1 ${y}h45`} stroke="#b84c4c" strokeWidth="1.800" />}
      <rect x="12.500" y="12.500" width="22" height="22" stroke={bright || big ? '#a8a8a8' : '#777'} />
      {hs && <path d="M14 23.500h19M17 19.500v8M30 19.500v8M15.500 21.500v4M31.500 21.500v4" stroke={blue} strokeWidth="1.500" />}
      {vs && <path d="M23.500 15v17M20.500 17.500h6M20.500 29.500h6M22 16h3M22 31h3" stroke={blue} strokeWidth="1.600" />}
      {xs.map((cx) => ys.map((cy) => (
        <rect key={`${cx}-${cy}`} x={cx - 1.8} y={cy - 1.8} width="3.600" height="3.600" fill="#cc9a00" />
      )))}
    </svg>
  );
};

const columns = [['left', 3], ['center', 4], ['right', 5], ['stretch', 7]];
const rows = [['top', 80], ['middle', 65], ['bottom', 65], ['stretch', 87]];

const AnchorPresets = () => (
  <Popup role="dialog" aria-label="Anchor Presets">
    <PopupHead>
      <strong>Anchor Presets</strong>
      <Hints>
        <span>Shift: Also set pivot</span>
        <span>Alt: Also set position</span>
      </Hints>
    </PopupHead>
    <PresetRow $head $h={95}>
      {columns.map(([h, col]) => (
        <ColHead key={h} $col={col}>
          {h}
          <PresetCell aria-label={h} $frame={h === 'stretch' ? '#c4c4c4' : ''}>
            <PresetIconArt h={h} />
          </PresetCell>
        </ColHead>
      ))}
    </PresetRow>
    {rows.map(([v, height]) => (
      <PresetRow key={v} $h={height}>
        <RowHead>
          <Vertical>{v}</Vertical>
          <PresetCell aria-label={v} $frame={v === 'stretch' ? '#c4c4c4' : ''}>
            <PresetIconArt v={v} bright={v !== 'stretch'} />
          </PresetCell>
        </RowHead>
        {columns.map(([h, col]) => {
          const current = h === 'stretch' && v === 'stretch';
          return (
            <PresetCell key={h} $col={col} aria-label={`${v} ${h}`} $frame={current ? '#fff' : ''}>
              <PresetIconArt h={h} v={v} big={current} />
              {current && <Marker $top={-16} $left={-18} $w={95} $h={90} />}
            </PresetCell>
          );
        })}
      </PresetRow>
    ))}
  </Popup>
);

const InspectorPanel = () => (
  <InspectorPane>
    <TabBar>
      <Tab $w={143} $pad={13}>
        <Icon size={16}>
          <circle cx="10" cy="10" r="9.500" fill="#c4c4c4" stroke="none" />
          <path d="M10 4v3M8 9.500h2.500V15M7.500 15h5.500" stroke="#333" strokeWidth="2.400" />
        </Icon>
        Inspector
      </Tab>
      <TabActions><LockIcon /><Dots /></TabActions>
    </TabBar>
    <ObjectHeader>
      <ObjectIcon aria-label="Object icon"><CubeIcon size={32} /><Caret /></ObjectIcon>
      <HeaderLines>
        <Line>
          <Check type="checkbox" defaultChecked aria-label="Active" />
          <NameField defaultValue="Image" aria-label="Name" />
          <StaticLabel><Check type="checkbox" />Static<Caret /></StaticLabel>
        </Line>
        <Line>
          <TagCaption>Tag</TagCaption>
          <Dropdown label="Tag" value="Untagged" $w={201} $bg="#515151" $r={4} />
          <Caption $w={78} $gap={10}>Layer</Caption>
          <Dropdown label="Layer" value="UI" $grow $bg="#515151" $r={4} />
        </Line>
      </HeaderLines>
    </ObjectHeader>
    <ComponentBar>
      <Foldout open />
      <Icon size={18} stroke="none" fill="#c4c4c4">
        <path d="M5 0l3.500 8.500L0 5q0-3 2-3 0-2 3-2zM15 0l-3.500 8.500L20 5q0-3-2-3 0-2-3-2zM5 20l3.500-8.500L0 15q0 3 2 3 0 2 3 2zM15 20l-3.500-8.500L20 15q0 3-2 3 0 2-3 2z" />
      </Icon>
      <ComponentName>Rect Transform</ComponentName>
      <HeaderTools />
    </ComponentBar>
    <RectBody>
      <AnchorWidget aria-haspopup="dialog">
        <WidgetTop>stretch</WidgetTop>
        <Vertical $size={16}>stretch</Vertical>
        <PresetIconArt h="stretch" v="stretch" size={54} big />
      </AnchorWidget>
      <Fields>
        <Field>Left<TextField defaultValue="0" /></Field>
        <Field>Top<TextField defaultValue="0" /></Field>
        <Field>Pos Z<TextField defaultValue="0" /></Field>
        <Field>Right<TextField defaultValue="0" /></Field>
        <Field>Bottom<TextField defaultValue="0" /></Field>
        <FieldButtons>
          <button aria-label="Blueprint mode">
            <Icon size={17} stroke="#8a8a8a" strokeWidth="2" strokeDasharray="3.500 2.500"><path d="M2 2h16v16H2z" /></Icon>
          </button>
          <button>R</button>
        </FieldButtons>
        <RowField $top={31}><TextField aria-label="Pivot Y" /></RowField>
        <RowField $top={15}>
          <TextField aria-label="Rotation Y" />
          <label>Z<TextField defaultValue="0" /></label>
        </RowField>
        <RowField $top={3}>
          <TextField aria-label="Scale Y" />
          <label>Z<TextField defaultValue="1" /></label>
        </RowField>
      </Fields>
      <SideFold $top={127} aria-label="Anchors"><Foldout /></SideFold>
      <AnchorPresets />
      <Marker $top={3} $left={-14} $w={160} $h={114} />
    </RectBody>
    <ComponentBar $thick>
      <Foldout open />
      <HeaderTools />
    </ComponentBar>
    <RendererBody />
    <ComponentBar>
      <Foldout open />
      <HeaderTools />
    </ComponentBar>
    <ImageBody>
      <ObjectField><button aria-label="Pick sprite"><TargetIcon /></button></ObjectField>
      <ObjectField $fill="#fff">
        <button aria-label="Pick color">
          <Icon size={18}><path d="M2 18l2-5 7-7 3 3-7 7z" /><path d="M10 4l6 6M12 7l4-5q3-1 3 2l-5 5z" fill="#c4c4c4" strokeWidth="2" /></Icon>
        </button>
      </ObjectField>
      <ObjectField><button aria-label="Pick material"><TargetIcon /></button></ObjectField>
      <SideFold $top={134} aria-label="Raycast padding"><Foldout /></SideFold>
    </ImageBody>
    <MaterialBlock>
      <Swatch><i /><Foldout /></Swatch>
      <MaterialLines>
        <MaterialTitle>
          <span>Default UI Material (Material)</span>
          <HelpIcon /><Dots />
        </MaterialTitle>
        <ShaderLine>
          <label htmlFor="shader">Shader</label>
          <SelectBox $grow $bg="#444" $r={3} $dim>
            <select id="shader" defaultValue="UI/Default"><option>UI/Default</option></select>
            <Caret fill="#8a8a8a" />
          </SelectBox>
          <EditButton>Edit...</EditButton>
        </ShaderLine>
      </MaterialLines>
    </MaterialBlock>
    <Strip />
    <AddComponent>Add Component</AddComponent>
    <PreviewBar>
      <button>Image<Caret /></button>
      <DragLines />
      <DotsCell><Dots /></DotsCell>
    </PreviewBar>
  </InspectorPane>
);

/* ---------- status bar ---------- */

const StatusBar = styled.footer`
  display: flex;
  justify-content: flex-end;
  height: 17px;
  background: #191919;
  overflow: hidden;

  button {
    width: 39px;
    height: 28px;
    padding: 6px 0 0 8px;
    border-left: 2px solid #242424;
  }
`;

const Watermark = styled.div`
  position: absolute;
  right: 4px;
  bottom: 14px;
  z-index: 10;
  color: #c4c4c4;
  font: 47px/56px 'Liberation Sans', sans-serif;
  text-shadow: 1px 2px 2px rgba(0, 0, 0, 0.7);
  pointer-events: none;
`;

const menus = ['File', 'Edit', 'Assets', 'GameObject', 'Component', 'Window', 'Help'];

const Editor = () => (
  <App>
    <GlobalStyle />
    <TitleBar>
      <AppLogo />
      <span>TheFirstGame - SceneLogin - Windows, Mac, Linux - Unity 2021.3.34f1c1 Personal* &lt;DX11&gt;</span>
      <WindowButtons>
        <IconButton aria-label="Minimize"><Icon size={16} stroke="#8e8e8e"><path d="M1 10h18" /></Icon></IconButton>
        <IconButton aria-label="Restore"><Icon size={16} stroke="#8e8e8e"><path d="M1 5h13v14H1zM5 1h11q3 0 3 3v11" /></Icon></IconButton>
        <IconButton aria-label="Close"><Icon size={16} stroke="#8e8e8e"><path d="M1 1l18 18M19 1L1 19" /></Icon></IconButton>
      </WindowButtons>
    </TitleBar>
    <MenuBar>
      {menus.map((name) => <button key={name}>{name}</button>)}
    </MenuBar>
    <MainToolbar>
      <ToolbarSide>
        <BarButton $w={83}>
          <Icon size={19}><circle cx="10" cy="10" r="9.500" fill="#c4c4c4" stroke="none" /><circle cx="10" cy="6.500" r="3" fill="#383838" stroke="none" /><path d="M4.500 11h11q-.5 5-5.500 5t-5.500-5z" fill="#383838" stroke="none" /></Icon>
          韩
          <Caret />
        </BarButton>
        <BarButton aria-label="Cloud">
          <Icon w={21} h={16} box="0 0 21 16" stroke="none" fill="#c4c4c4"><path d="M4 16Q0 16 0 11.500 0 8 3.500 7.500 4 0 10.500 0T17 7q4 .5 4 4.500T17 16z" /></Icon>
        </BarButton>
        <BarButton $h={31} aria-label="Developer">
          <Icon w={18} h={20} box="0 0 18 20" strokeWidth="1.900"><path d="M9 1l7.500 4.500v9L9 19l-7.500-4.500v-9zM7 6.500v7M7 6.500q5 0 5 3.500t-5 3.500" /></Icon>
        </BarButton>
      </ToolbarSide>
      <PlayControls>
        <BarButton aria-label="Play"><Icon size={16} stroke="none" fill="#c4c4c4"><path d="M3 1l15 9-15 9z" /></Icon></BarButton>
        <BarButton aria-label="Pause"><Icon size={16} stroke="none" fill="#c4c4c4"><path d="M2 1h6v18H2zM12 1h6v18h-6z" /></Icon></BarButton>
        <BarButton aria-label="Step" $dim><Icon size={16} stroke="none" fill="#9a9a9a"><path d="M1 1l14 9-14 9zM16 1h3v18h-3z" /></Icon></BarButton>
      </PlayControls>
      <ToolbarSide $end>
        <BarButton aria-label="History">
          <Icon size={20}><path d="M3 5.500A8 8 0 1 1 2.500 12M1.500 2v5h5M10.500 5.500V11h4" strokeWidth="2" /></Icon>
        </BarButton>
        <BarButton aria-label="Search"><SearchIcon size={19} /></BarButton>
        <Dropdown label="Layers" value="Layers" $w={118} $h={28} $bg="#383838" $r={2} />
        <Dropdown label="Layout" value="2 by 3" $w={118} $h={28} $bg="#383838" $r={2} />
      </ToolbarSide>
    </MainToolbar>
    <Workspace>
      <LeftStack>
        <ScenePanel />
        <GamePanel />
      </LeftStack>
      <HierarchyPanel />
      <ProjectPanel />
      <InspectorPanel />
    </Workspace>
    <StatusBar>
      <button aria-label="Debugger"><Icon size={19}><path d="M5 6h10v8q0 5-5 5t-5-5z" fill="#c4c4c4" /><path d="M1 5l4 3M19 3l-4 4M6 1l2 4M14 1l-2 4" /><path d="M2 1l16 18" stroke="#191919" strokeWidth="2" /></Icon></button>
      <button aria-label="Cache"><Icon size={19} stroke="none" fill="#c4c4c4"><ellipse cx="11" cy="5" rx="9" ry="4" /><path d="M2 7q9 6 18 0v10H2z" /><path d="M1 3l14 14" stroke="#191919" strokeWidth="2.500" /></Icon></button>
      <button aria-label="Lighting"><Icon size={19}><path d="M2 8Q10-3 19 8" strokeWidth="2" /><circle cx="11" cy="11" r="5" fill="#c4c4c4" stroke="none" /><path d="M1 1l14 16" strokeWidth="2" /></Icon></button>
      <button aria-label="Progress"><Icon size={21}><circle cx="10" cy="10" r="9" strokeWidth="1.400" /><path d="M6 11l3 3 6-7" strokeWidth="1.400" /></Icon></button>
    </StatusBar>
    <Watermark>CSDN @__water</Watermark>
  </App>
);

export default Editor;
